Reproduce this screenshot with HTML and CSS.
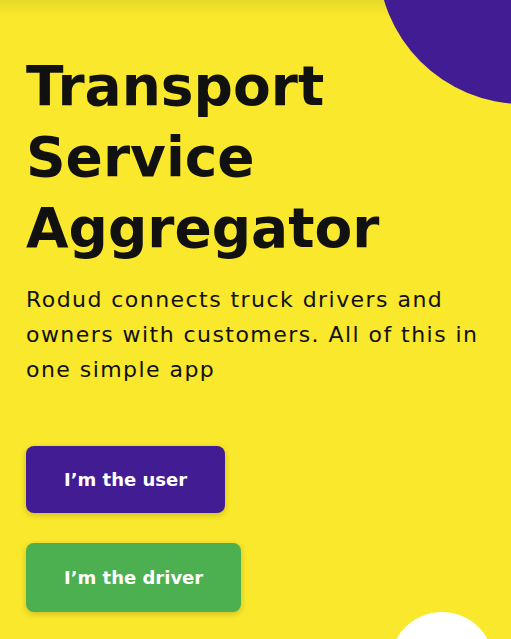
FILE: index.html
```html
<!DOCTYPE html>
<html lang="en">
<head>
<meta charset="utf-8">
<title>Rodud</title>
<link rel="stylesheet" href="styles.css">
</head>
<body>
<main class="hero">
  <div class="blob blob-purple"></div>
  <div class="blob blob-white"></div>
  <div class="content">
    <h1 class="title">Transport Service Aggregator</h1>
    <p class="lead">Rodud connects truck drivers and owners with customers. All of this in one simple app</p>
    <div class="actions">
      <button class="btn btn-user">I’m the user</button>
      <button class="btn btn-driver">I’m the driver</button>
    </div>
  </div>
</main>
</body>
</html>
```
FILE: styles.css
```css
html, body {
  margin: 0;
  padding: 0;
}
body {
  background: #f9e82b;
  font-family: "DejaVu Sans", "Open Sans", sans-serif;
  color: #111111;
  overflow: hidden;
}
.hero {
  position: relative;
  width: 511px;
  height: 639px;
  overflow: hidden;
  background: linear-gradient(#e9d92a 0, #f9e82b 16px);
}
.blob {
  position: absolute;
  border-radius: 50%;
}
.blob-purple {
  width: 290px;
  height: 290px;
  left: 378px;
  top: -186px;
  background: #421c93;
}
.blob-white {
  width: 104px;
  height: 104px;
  left: 390px;
  top: 612px;
  background: #ffffff;
}
.content {
  position: relative;
  padding: 51px 26px 0 26px;
  display: flex;
  flex-direction: column;
}
.title {
  margin: 0;
  font-size: 55px;
  line-height: 71px;
  font-weight: 700;
  width: 420px;
}
.lead {
  margin: 18px 0 0 0;
  font-size: 22px;
  line-height: 35px;
  letter-spacing: 1.45px;
  width: 470px;
}
.actions {
  margin-top: 59px;
  display: flex;
  flex-direction: column;
  align-items: flex-start;
  gap: 30px;
}
.btn {
  border: none;
  border-radius: 8px;
  color: #ffffff;
  font-family: inherit;
  font-weight: 700;
  font-size: 18px;
  height: 67px;
  padding: 0 38px;
  box-shadow: 0 2px 6px rgba(0,0,0,0.18);
}
.btn-user { background: #421c93; }
.btn-driver { background: #4caf50; height: 69px; }
```
